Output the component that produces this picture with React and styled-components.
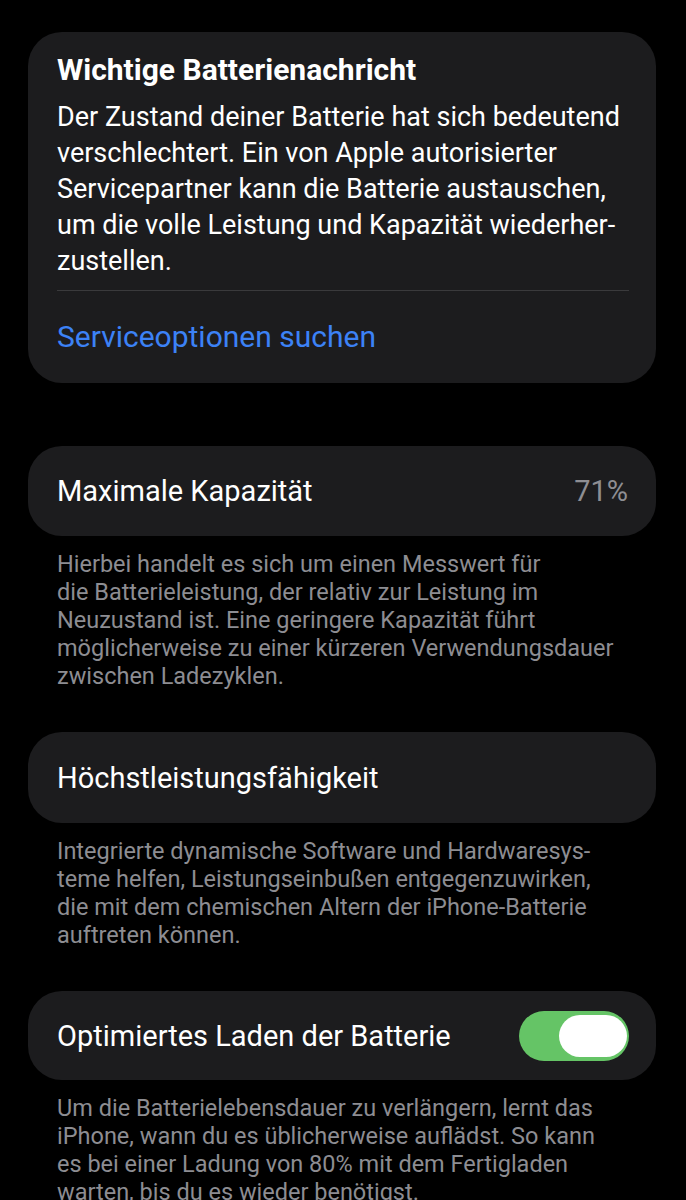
import React from "react";
import styled, { createGlobalStyle } from "styled-components";

const Global = createGlobalStyle`
  html, body { margin: 0; padding: 0; background: #000; }
  body { font-family: Roboto, "Noto Sans", sans-serif; -webkit-font-smoothing: antialiased; }
`;

const Page = styled.div`
  background: #000;
  padding: 32px 30px 0 28px;
  display: flex;
  flex-direction: column;
  overflow: hidden;
  height: 1200px;
  box-sizing: border-box;
`;

const Card = styled.div`
  background: #1c1c1e;
  border-radius: 34px;
  padding: 0 28px 0 29px;
  margin-top: ${(p) => p.$mt || 0}px;
`;

const Title = styled.div`
  color: #fff;
  font-weight: 700;
  font-size: 30px;
  line-height: 36px;
  padding-top: 20px;
`;

const Body = styled.div`
  color: #fff;
  font-size: 27px;
  line-height: 36px;
  margin-top: 11px;
  padding-bottom: 11px;
`;

const Divider = styled.div`
  height: 1px;
  background: #3a3a3c;
  margin-right: -1px;
`;

const Link = styled.div`
  color: #3c82f6;
  font-size: 30px;
  line-height: 92px;
  height: 92px;
`;

const Row = styled.div`
  display: flex;
  align-items: center;
  justify-content: space-between;
  height: ${(p) => p.$h || 90}px;
`;

const Label = styled.span`
  color: #fff;
  font-size: 29px;
`;

const Value = styled.span`
  color: #8e8e93;
  font-size: 29px;
`;

const Footer = styled.div`
  color: #8d8d92;
  font-size: 23.5px;
  line-height: 28px;
  padding: 14px 20px 0 29px;
`;

const Toggle = styled.div`
  width: 110px;
  height: 50px;
  border-radius: 25px;
  background: #65c466;
  display: flex;
  align-items: center;
  justify-content: flex-end;
  padding: 4px 2px;
  box-sizing: border-box;
  margin-right: -1px;
`;

const Knob = styled.div`
  width: 68px;
  height: 42px;
  border-radius: 21px;
  background: #fff;
`;

export default function App() {
  return (
    <>
      <Global />
      <Page>
        <Card>
          <Title>Wichtige Batterienachricht</Title>
          <Body>
            Der Zustand deiner Batterie hat sich bedeutend
            <br />
            verschlechtert. Ein von Apple autorisierter
            <br />
            Servicepartner kann die Batterie austauschen,
            <br />
            um die volle Leistung und Kapazität wiederher-
            <br />
            zustellen.
          </Body>
          <Divider />
          <Link>Serviceoptionen suchen</Link>
        </Card>

        <Card $mt={63}>
          <Row>
            <Label>Maximale Kapazität</Label>
            <Value>71%</Value>
          </Row>
        </Card>
        <Footer>
          Hierbei handelt es sich um einen Messwert für
          <br />
          die Batterieleistung, der relativ zur Leistung im
          <br />
          Neuzustand ist. Eine geringere Kapazität führt
          <br />
          möglicherweise zu einer kürzeren Verwendungsdauer
          <br />
          zwischen Ladezyklen.
        </Footer>

        <Card $mt={42}>
          <Row $h={91}>
            <Label>Höchstleistungsfähigkeit</Label>
          </Row>
        </Card>
        <Footer>
          Integrierte dynamische Software und Hardwaresys-
          <br />
          teme helfen, Leistungseinbußen entgegenzuwirken,
          <br />
          die mit dem chemischen Altern der iPhone-Batterie
          <br />
          auftreten können.
        </Footer>

        <Card $mt={42}>
          <Row $h={89}>
            <Label>Optimiertes Laden der Batterie</Label>
            <Toggle>
              <Knob />
            </Toggle>
          </Row>
        </Card>
        <Footer>
          Um die Batterielebensdauer zu verlängern, lernt das
          <br />
          iPhone, wann du es üblicherweise auflädst. So kann
          <br />
          es bei einer Ladung von 80% mit dem Fertigladen
          <br />
          warten, bis du es wieder benötigst.
        </Footer>
      </Page>
    </>
  );
}
